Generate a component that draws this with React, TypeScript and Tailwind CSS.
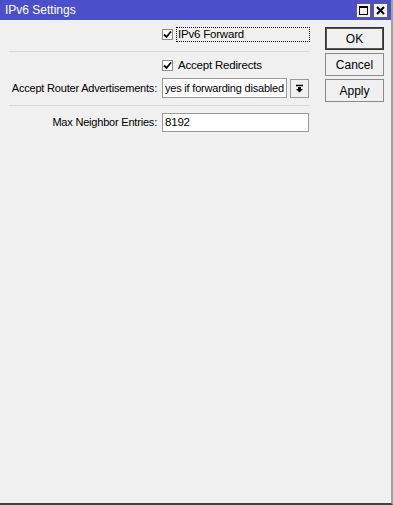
import React from "react"

const font = { fontFamily: '"Liberation Sans", Arial, sans-serif' }

const Check = () => (
    <span className="w-[11px] h-[11px] border border-[#8a8a8a] bg-white flex items-center justify-center shrink-0">
        <svg width="9" height="9" viewBox="0 0 9 9">
            <path d="M1 4.5 L3.5 7 L8 1.5" fill="none" stroke="#000" strokeWidth="1.8" />
        </svg>
    </span>
)

const Btn = ({ label, def }: { label: string; def?: boolean }) => (
    <button className={`w-[59px] h-[23px] bg-[#f0f0f0] text-[12px] text-black flex items-center justify-center border ${def ? "border-[#333] shadow-[inset_0_0_0_1px_#555]" : "border-[#8a8a8a]"}`}>
        {label}
    </button>
)

export default function App() {
    return (
        <div className="w-[393px] h-[505px] bg-[#f0f0f0] flex flex-col border-r-2 border-b-2 border-r-[#a0a0a0] border-b-[#404040] overflow-hidden" style={font}>
            <div className="h-[20px] bg-[#4b4fc9] flex items-center justify-between pl-[5px] pr-[3px] shrink-0">
                <span className="text-white text-[12px] leading-none">IPv6 Settings</span>
                <div className="flex gap-[2px]">
                    <span className="w-[15px] h-[15px] bg-[#f0f0f0] border border-[#606060] flex items-center justify-center">
                        <span className="w-[9px] h-[9px] border border-black border-t-2" />
                    </span>
                    <span className="w-[15px] h-[15px] bg-[#f0f0f0] border border-[#606060] flex items-center justify-center">
                        <svg width="9" height="9" viewBox="0 0 9 9">
                            <path d="M1 1 L8 8 M8 1 L1 8" stroke="#000" strokeWidth="2" />
                        </svg>
                    </span>
                </div>
            </div>
            <div className="flex flex-1">
                <div className="w-[310px] pl-[9px] text-[11.5px] tracking-[-0.2px] text-black whitespace-nowrap">
                    <div className="flex items-center h-[15px] mt-[7px] pl-[153px]">
                        <Check />
                        <span className="ml-[3px] flex-1 h-[15px] border border-dotted border-black flex items-center pl-[1px]">IPv6 Forward</span>
                    </div>
                    <div className="h-px bg-[#d8d8d8] mt-[9px]" />
                    <div className="flex items-center h-[15px] mt-[6px] pl-[153px]">
                        <Check />
                        <span className="ml-[5px]">Accept Redirects</span>
                    </div>
                    <div className="flex items-center mt-[5px] h-[20px]">
                        <span className="w-[148px] text-right text-[11px]">Accept Router Advertisements:</span>
                        <span className="ml-[5px] w-[125px] h-[20px] bg-white border border-[#9a9a9a] flex items-center pl-[2px] text-[11px] overflow-hidden">yes if forwarding disabled</span>
                        <span className="ml-[3px] w-[19px] h-[19px] border border-[#9a9a9a] flex items-center justify-center">
                            <svg width="9" height="9" viewBox="0 0 9 9">
                                <path d="M1 1.5 H8" stroke="#000" strokeWidth="1.5" />
                                <path d="M3 3 H6 V5 H8 L4.5 8.5 L1 5 H3 Z" fill="#000" />
                            </svg>
                        </span>
                    </div>
                    <div className="h-px bg-[#d8d8d8] mt-[7px]" />
                    <div className="flex items-center mt-[7px] h-[19px]">
                        <span className="w-[148px] text-right text-[11px]">Max Neighbor Entries:</span>
                        <span className="ml-[5px] w-[147px] h-[19px] bg-white border border-[#9a9a9a] flex items-center pl-[2px]">8192</span>
                    </div>
                </div>
                <div className="flex flex-col gap-[3px] pl-[15px] pt-[7px]">
                    <Btn label="OK" def />
                    <Btn label="Cancel" />
                    <Btn label="Apply" />
                </div>
            </div>
        </div>
    )
}
